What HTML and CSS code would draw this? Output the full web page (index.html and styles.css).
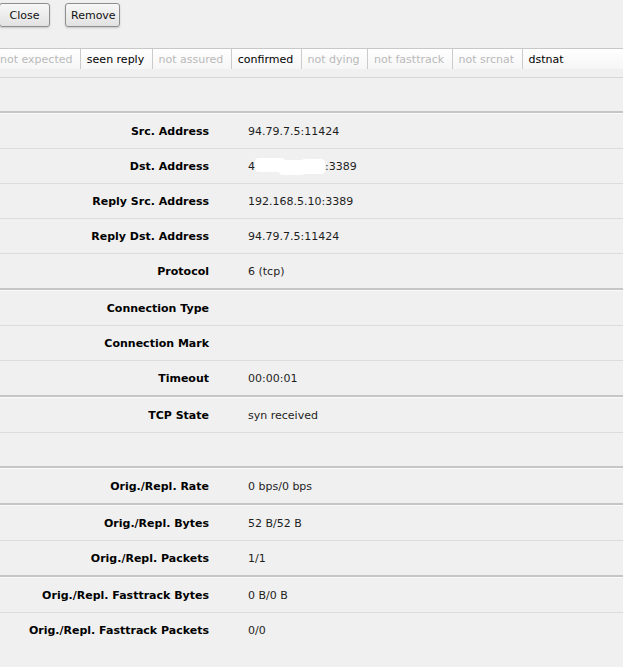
FILE: index.html
```html
<!DOCTYPE html>
<html>
<head>
<meta charset="utf-8">
<link rel="stylesheet" href="styles.css">
</head>
<body>
<div class="page">
  <div class="toolbar">
    <button class="btn btn-close">Close</button>
    <button class="btn btn-remove">Remove</button>
  </div>

  <div class="flags">
    <span class="flag off">not expected</span>
    <span class="flag on">seen reply</span>
    <span class="flag off">not assured</span>
    <span class="flag on">confirmed</span>
    <span class="flag off">not dying</span>
    <span class="flag off">not fasttrack</span>
    <span class="flag off">not srcnat</span>
    <span class="flag on last">dstnat</span>
  </div>
  <div class="strip"></div>
  <div class="blank"></div>

  <div class="section">
    <div class="row"><div class="label">Src. Address</div><div class="value">94.79.7.5:11424</div></div>
    <div class="row"><div class="label">Dst. Address</div><div class="value">4<span class="redact"><span class="blob b1"></span><span class="blob b2"></span><span class="blob b3"></span></span>:3389</div></div>
    <div class="row"><div class="label">Reply Src. Address</div><div class="value">192.168.5.10:3389</div></div>
    <div class="row"><div class="label">Reply Dst. Address</div><div class="value">94.79.7.5:11424</div></div>
    <div class="row"><div class="label">Protocol</div><div class="value">6 (tcp)</div></div>
  </div>

  <div class="section">
    <div class="row"><div class="label">Connection Type</div><div class="value"></div></div>
    <div class="row"><div class="label">Connection Mark</div><div class="value"></div></div>
    <div class="row"><div class="label">Timeout</div><div class="value">00:00:01</div></div>
  </div>

  <div class="section">
    <div class="row"><div class="label">TCP State</div><div class="value">syn received</div></div>
    <div class="row row-empty"></div>
  </div>

  <div class="section">
    <div class="row"><div class="label">Orig./Repl. Rate</div><div class="value">0 bps/0 bps</div></div>
  </div>

  <div class="section">
    <div class="row"><div class="label">Orig./Repl. Bytes</div><div class="value">52 B/52 B</div></div>
    <div class="row"><div class="label">Orig./Repl. Packets</div><div class="value">1/1</div></div>
  </div>

  <div class="section">
    <div class="row"><div class="label">Orig./Repl. Fasttrack Bytes</div><div class="value">0 B/0 B</div></div>
    <div class="row"><div class="label">Orig./Repl. Fasttrack Packets</div><div class="value">0/0</div></div>
  </div>
</div>
</body>
</html>
```

FILE: styles.css
```css
html, body {
  margin: 0;
  padding: 0;
  background: #f0f0f0;
  overflow: hidden;
}

body {
  font-family: "DejaVu Sans", Verdana, sans-serif;
  font-size: 11px;
  color: #1a1a1a;
}

.page {
  width: 623px;
}

.toolbar {
  display: flex;
  gap: 15px;
  height: 48px;
  padding-top: 3px;
  box-sizing: border-box;
  margin-left: -1px;
  align-items: flex-start;
}

.btn {
  height: 24px;
  border: 1px solid #8e8e8e;
  border-radius: 3px;
  background: linear-gradient(#f7f7f7, #e2e2e2);
  box-shadow: 0 1px 2px rgba(0, 0, 0, 0.18);
  font-family: "DejaVu Sans", Verdana, sans-serif;
  font-size: 11px;
  color: #111;
  padding: 0 5px;
  margin: 0;
}

.btn-close {
  width: 51px;
}

.btn-remove {
  width: 55px;
}

.flags {
  display: flex;
  margin-left: -6px;
  width: 629px;
  height: 21px;
  border-top: 1px solid #c8c8c8;
  box-sizing: border-box;
}

.flag {
  display: flex;
  align-items: center;
  padding: 0 7.4px 0 6px;
  background: linear-gradient(#ffffff, #f6f6f6);
  border-right: 1px solid #cbcbcb;
  white-space: nowrap;
}

.flag.off {
  color: #b9b9b9;
}

.flag.on {
  color: #000;
}

.flag.last {
  flex: 1;
  border-right: none;
}

.strip {
  height: 8px;
  border-bottom: 1px solid #d6d6d6;
}

.blank {
  height: 33px;
}

.section {
  border-top: 2px solid #c6c6c6;
}

.section::before {
  content: "";
  display: block;
  height: 1px;
  background: #fafafa;
}

.row {
  display: flex;
  align-items: center;
  height: 35px;
  border-bottom: 1px solid #dcdcdc;
  box-sizing: border-box;
}

.row:last-child {
  border-bottom: none;
  height: 34px;
}

.row-empty:last-child {
  height: 33px;
}

.label {
  width: 209px;
  text-align: right;
  font-weight: bold;
  color: #000;
  white-space: nowrap;
}

.value {
  margin-left: 39px;
  color: #1e1e1e;
  white-space: nowrap;
  display: flex;
  align-items: center;
}

.redact {
  position: relative;
  display: inline-block;
  width: 70px;
  height: 13px;
}

.blob {
  position: absolute;
  background: #ffffff;
  border-radius: 4px;
}

.b1 {
  left: 0;
  top: -2px;
  width: 30px;
  height: 14px;
}

.b2 {
  left: 24px;
  top: 0;
  width: 26px;
  height: 15px;
}

.b3 {
  left: 46px;
  top: -1px;
  width: 24px;
  height: 15px;
}
```
